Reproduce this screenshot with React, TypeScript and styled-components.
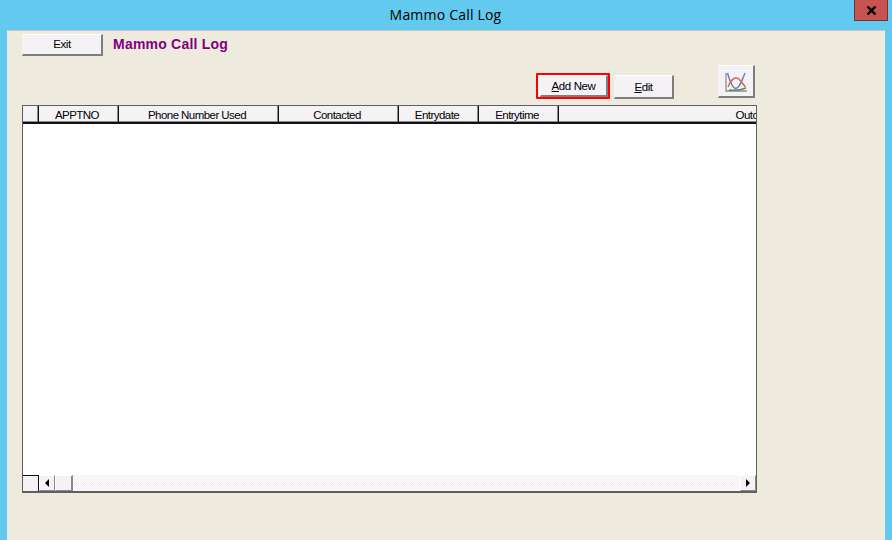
import styled, { createGlobalStyle } from "styled-components";

const GlobalStyle = createGlobalStyle`
    html, body {
        margin: 0;
        padding: 0;
        background-color: #62caef;
    }
    * {
        box-sizing: border-box;
    }
`;

const columns = [
    { label: "", width: 16 },
    { label: "APPTNO", width: 80 },
    { label: "Phone Number Used", width: 160 },
    { label: "Contacted", width: 120 },
    { label: "Entrydate", width: 80 },
    { label: "Entrytime", width: 80 },
    { label: "Outcome", width: 400 },
];

function ChartIcon() {
    return (
        <svg width="24" height="24" viewBox="0 0 24 24" fill="none">
            <path d="M2 4V22H23" stroke="#8f8f8f" strokeWidth="1.3" />
            <path d="M5 21C10 21.5 17 21 22 19" stroke="#5f8a3c" strokeWidth="1.5" />
            <path d="M3.5 4C5.5 11 8 19 11.5 19.5C15.5 20 18 11 21 4" stroke="#5b7fc4" strokeWidth="1.4" />
            <path d="M4 18C6 13 9 9 12 9C16 9 18 14 21.5 18" stroke="#e2604a" strokeWidth="1.4" />
        </svg>
    );
}

export default function App() {
    return (
        <>
            <GlobalStyle />
            <Window>
                <TitleBar>
                    <WindowTitle>Mammo Call Log</WindowTitle>
                    <CloseButton>
                        <svg width="11" height="9" viewBox="0 0 11 9">
                            <path d="M1.5 0.5L9.5 8.5M9.5 0.5L1.5 8.5" stroke="#000" strokeWidth="2.4" />
                        </svg>
                    </CloseButton>
                </TitleBar>
                <Form>
                    <TopRow>
                        <ActionButton $width={81} $height={22}>Exit</ActionButton>
                        <FormTitle>Mammo Call Log</FormTitle>
                    </TopRow>
                    <Toolbar>
                        <Highlight>
                            <ActionButton $width={68} $height={22} $low>
                                <u>A</u>dd New
                            </ActionButton>
                        </Highlight>
                        <ActionButton $width={60} $height={24} $low>
                            <u>E</u>dit
                        </ActionButton>
                        <ChartButton>
                            <ChartIcon />
                        </ChartButton>
                    </Toolbar>
                    <Grid>
                        <HeaderRow>
                            {columns.map((col, i) => (
                                <HeaderCell key={i} $width={col.width}>
                                    {col.label}
                                </HeaderCell>
                            ))}
                        </HeaderRow>
                        <Rows />
                        <ScrollRow>
                            <Corner />
                            <ScrollButton>
                                <ArrowLeft />
                            </ScrollButton>
                            <ScrollThumb />
                            <ScrollTrack />
                            <ScrollButton>
                                <ArrowRight />
                            </ScrollButton>
                        </ScrollRow>
                    </Grid>
                </Form>
            </Window>
        </>
    );
}

const Window = styled.div`
    width: 892px;
    height: 540px;
    display: flex;
    flex-direction: column;
    overflow: hidden;
    background-color: #62caef;
    font-family: "Liberation Sans", Arial, sans-serif;
`;

const TitleBar = styled.div`
    height: 30px;
    flex-shrink: 0;
    display: flex;
    justify-content: center;
    position: relative;
`;

const WindowTitle = styled.div`
    font-family: "Open Sans", sans-serif;
    font-size: 14px;
    letter-spacing: 0.2px;
    line-height: 30px;
    color: #000;
    margin-left: -1px;
`;

const CloseButton = styled.div`
    position: absolute;
    top: 0;
    left: 854px;
    width: 34px;
    height: 21px;
    background-color: #c75450;
    border: 1px solid #6f3535;
    border-top: none;
    display: flex;
    align-items: center;
    justify-content: center;
`;

const Form = styled.div`
    flex: 1;
    margin: 0 7px;
    padding: 3px 0 0 15px;
    background-color: #eeeade;
    border-top: 1px solid #c9c9c2;
`;

const TopRow = styled.div`
    display: flex;
    align-items: center;
    gap: 10px;
`;

const FormTitle = styled.div`
    font-size: 14px;
    font-weight: bold;
    letter-spacing: 0.22px;
    color: #800080;
    line-height: 20px;
    margin-bottom: 2px;
`;

const ActionButton = styled.div<{ $width: number; $height: number; $low?: boolean }>`
    width: ${(p) => p.$width}px;
    height: ${(p) => p.$height}px;
    display: flex;
    align-items: center;
    justify-content: center;
    padding: ${(p) => (p.$low ? "1px 0 0" : "0 0 1px")};
    background-color: #f5f2f6;
    border: 1px solid;
    border-color: #fff #7d7d7d #7d7d7d #f5f5f5;
    border-width: 1px 2px 2px 1px;
    font-size: 11.5px;
    letter-spacing: -0.4px;
    color: #000;
    flex-shrink: 0;
    white-space: pre;
`;

const Toolbar = styled.div`
    height: 51px;
    margin-top: -1px;
    width: 734px;
    display: flex;
    align-items: flex-start;
    padding: 10px 0 0 514px;
`;

const Highlight = styled.div`
    margin-top: 8px;
    padding: 0 0 0 2px;
    width: 74px;
    height: 26px;
    background-color: #f5f2f6;
    border: 2px solid #ff0000;
    border-radius: 1px;
    display: flex;
    align-items: center;
    justify-content: center;
    flex-shrink: 0;
    margin-right: 4px;

    & + div {
        margin-top: 10px;
    }
`;

const ChartButton = styled.div`
    width: 37px;
    height: 33px;
    margin-left: 44px;
    flex-shrink: 0;
    display: flex;
    align-items: center;
    justify-content: center;
    background-color: #f5f2f6;
    border: 1px solid;
    border-color: #fff #7d7d7d #7d7d7d #f5f5f5;
    border-width: 1px 2px 2px 1px;
`;

const Grid = styled.div`
    width: 735px;
    height: 388px;
    margin-top: -1px;
    display: flex;
    flex-direction: column;
    background-color: #fff;
    border: 1px solid #5f5f5f;
    border-width: 1px 1px 2px 1px;
    overflow: hidden;
`;

const HeaderRow = styled.div`
    height: 18px;
    flex-shrink: 0;
    display: flex;
    border-bottom: 2px solid #111;
`;

const HeaderCell = styled.div<{ $width: number }>`
    width: ${(p) => p.$width}px;
    flex-shrink: 0;
    padding-right: 3px;
    text-align: center;
    font-size: 11.5px;
    line-height: 18px;
    letter-spacing: -0.55px;
    color: #000;
    background-color: #f5f2f6;
    border-right: 1px solid #111;
    box-shadow: inset -1px -1px 0 #8a8a8a;
`;

const Rows = styled.div`
    flex: 1;
    background-color: #fff;
`;

const ScrollRow = styled.div`
    height: 16px;
    flex-shrink: 0;
    display: flex;
`;

const Corner = styled.div`
    width: 16px;
    background-color: #f5f2f6;
    border-top: 1px solid #111;
    border-right: 1px solid #111;
`;

const ScrollButton = styled.div`
    width: 16px;
    flex-shrink: 0;
    display: flex;
    align-items: center;
    justify-content: center;
    background-color: #f5f2f6;
    border: 1px solid;
    border-color: #fff #8a8a8a #8a8a8a #fff;
`;

const ScrollThumb = styled(ScrollButton)`
    width: 18px;
    border-width: 1px 2px 1px 1px;
`;

const ScrollTrack = styled.div`
    flex: 1;
    background-color: #fbf9fb;
    background-image: repeating-conic-gradient(#f1edf1 0 25%, #ffffff 0 50%);
    background-size: 2px 2px;
`;

const ArrowLeft = styled.div`
    width: 0;
    height: 0;
    border-style: solid;
    border-width: 4px 4px 4px 0;
    border-color: transparent #000 transparent transparent;
`;

const ArrowRight = styled.div`
    width: 0;
    height: 0;
    border-style: solid;
    border-width: 4px 0 4px 4px;
    border-color: transparent transparent transparent #000;
`;
